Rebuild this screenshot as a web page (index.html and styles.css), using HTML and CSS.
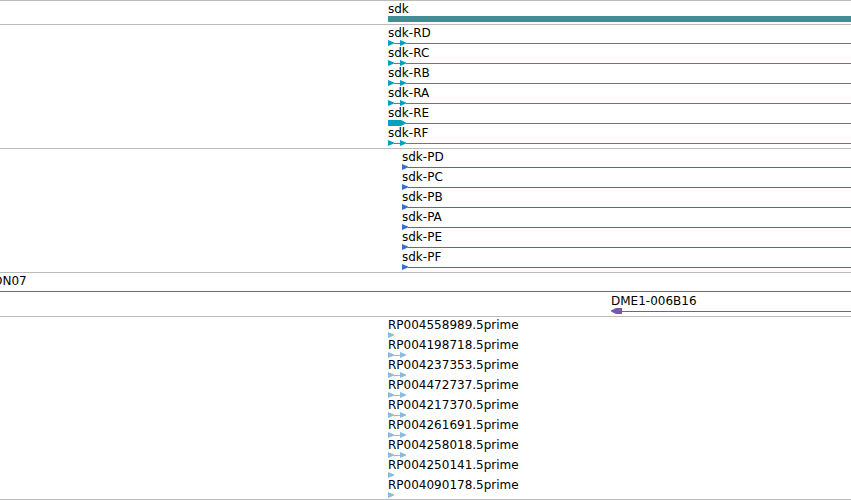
FILE: index.html
```
<!DOCTYPE html>
<html lang="en">
<head>
  <meta charset="UTF-8">
  <title>sdk - Genome Browser</title>
  <meta name="viewport" content="width=device-width, initial-scale=1.0">
  <link rel="stylesheet" href="styles.css">
</head>
<body>
  <svg class="defs" aria-hidden="true">
    <symbol id="arrow" viewBox="0 0 6 6"><path d="M0 0l6 2.6v.8L0 6z"/></symbol>
    <symbol id="exon" viewBox="0 0 18 6"><path d="M0 0h13l5 2.6v.8L13 6H0z"/></symbol>
    <symbol id="reverse" viewBox="0 0 11 6"><path d="M0 2.6L5 0h6v6H5L0 3.4z"/></symbol>
  </svg>
  <main id="tracks"></main>
  <script src="tracks.js"></script>
</body>
</html>
```
FILE: styles.css
```
body { margin: 0; background: #fff; color: #000; font-family: "DejaVu Sans", sans-serif; font-size: 12px; overflow-x: hidden; }
.defs { display: none; }
.track { list-style: none; margin: 0; padding: 1px 0 2px; border-top: 1px solid #bbb; overflow: hidden; }
.track:last-child { padding-bottom: 1px; border-bottom: 1px solid #bbb; }
.feature { display: flow-root; }
.label { display: block; height: 14px; line-height: 14px; white-space: nowrap; }
.glyph { display: flex; height: 6px; }
.glyph svg { flex: none; width: 6px; height: 6px; fill: currentColor; }
.glyph .exon { width: 18px; }
.glyph .reverse { width: 11px; }
.line { flex: 1; height: 1px; margin-top: 3px; background: currentColor; }
.intron { flex: 0 0 6px; }
.bar { flex: 1; background: currentColor; }

.feature { margin-left: 388px; }
.protein .feature { margin-left: 402px; }
.insertion .feature { margin-left: -7px; }
.insertion .feature:last-child { margin-left: 611px; }

.gene .glyph { color: #3f8f94; }
.transcript .glyph { color: #00a0c0; }
.protein .glyph { color: #3570d0; }
.insertion .glyph { color: #7858a8; }
.est .glyph { color: #88bbdd; }
```
FILE: tracks.js
```
var icon = function (name) {
  return '<svg class="' + name + '"><use href="#' + name + '"/></svg>';
};
var line = '<span class="line"></span>';
var pair = icon('arrow') + '<span class="line intron"></span>' + icon('arrow');

var glyphs = {
  bar: '<span class="bar"></span>',
  line: line,
  single: icon('arrow'),
  pair: pair,
  spliced: pair + line,
  exon: icon('exon') + line,
  start: icon('arrow') + line,
  reverse: icon('reverse') + line
};

var tracks = [
  { type: 'gene', features: [['sdk', 'bar']] },
  { type: 'transcript', features: [
    ['sdk-RD', 'spliced'], ['sdk-RC', 'spliced'], ['sdk-RB', 'spliced'],
    ['sdk-RA', 'spliced'], ['sdk-RE', 'exon'], ['sdk-RF', 'spliced']
  ] },
  { type: 'protein', features: [
    ['sdk-PD', 'start'], ['sdk-PC', 'start'], ['sdk-PB', 'start'],
    ['sdk-PA', 'start'], ['sdk-PE', 'start'], ['sdk-PF', 'start']
  ] },
  { type: 'insertion', features: [['ON07', 'line'], ['DME1-006B16', 'reverse']] },
  { type: 'est', features: [
    ['RP004558989.5prime', 'single'], ['RP004198718.5prime', 'pair'],
    ['RP004237353.5prime', 'pair'], ['RP004472737.5prime', 'pair'],
    ['RP004217370.5prime', 'pair'], ['RP004261691.5prime', 'pair'],
    ['RP004258018.5prime', 'pair'], ['RP004250141.5prime', 'single'],
    ['RP004090178.5prime', 'single']
  ] }
];

document.getElementById('tracks').innerHTML = tracks.map(function (track) {
  return '<ul class="track ' + track.type + '">' + track.features.map(function (f) {
    return '<li class="feature"><span class="label">' + f[0] + '</span>' +
      '<div class="glyph">' + glyphs[f[1]] + '</div></li>';
  }).join('') + '</ul>';
}).join('');
```
